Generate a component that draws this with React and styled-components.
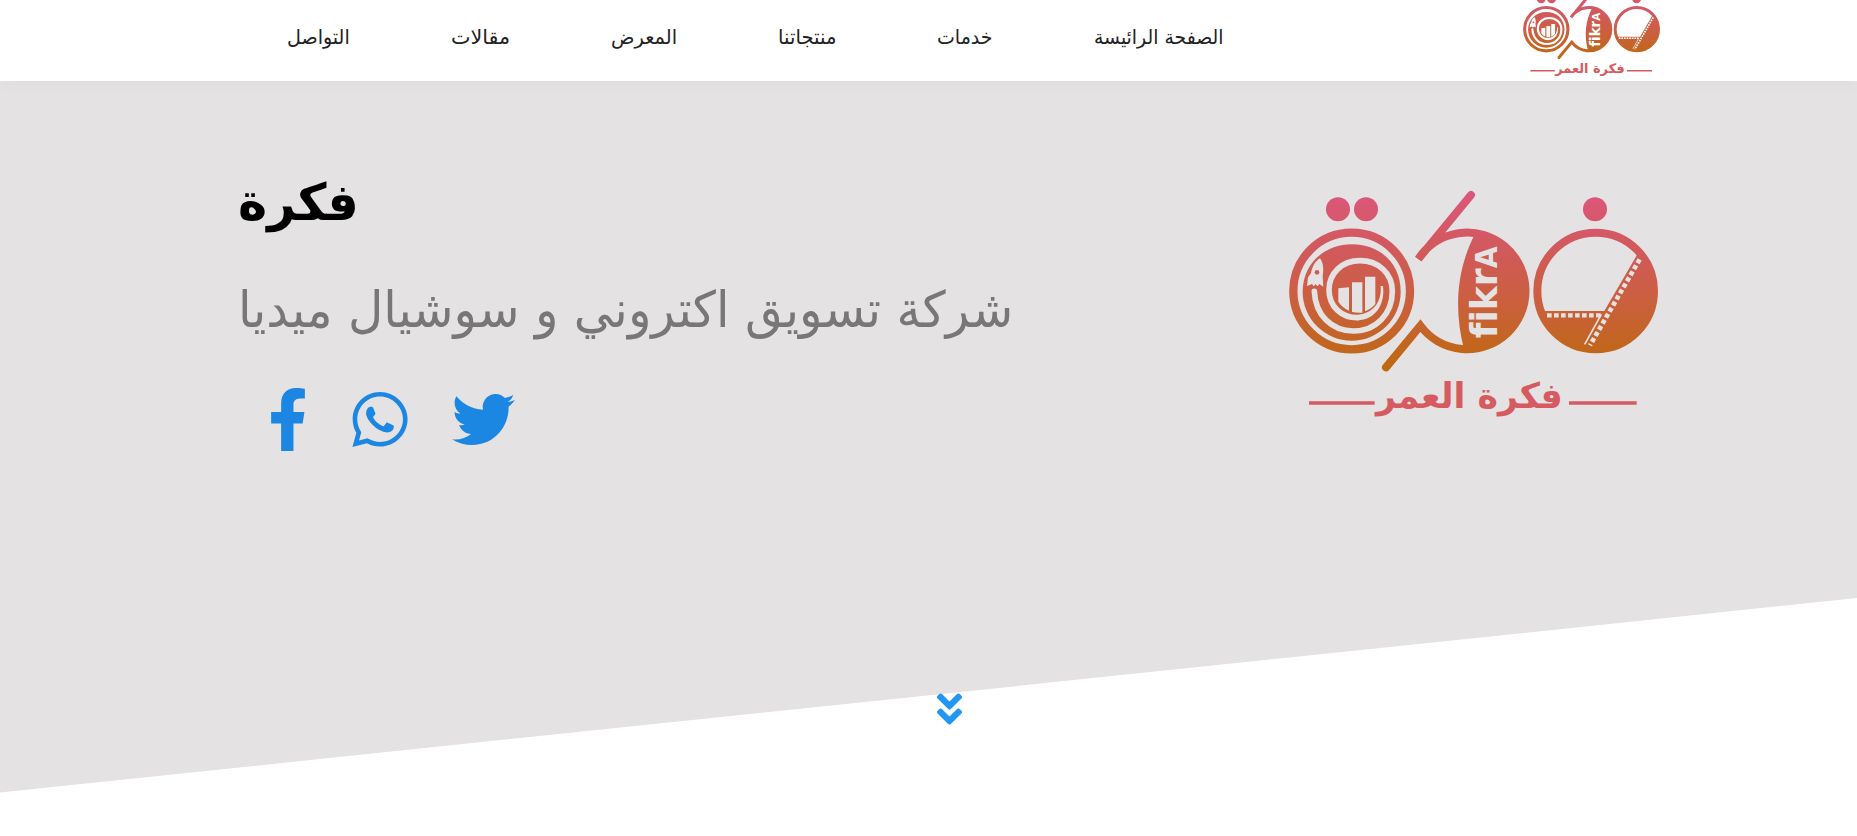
import React, { useLayoutEffect, useRef, useState } from "react";
import styled, { createGlobalStyle } from "styled-components";
import { FaFacebookF, FaWhatsapp, FaTwitter, FaAngleDoubleDown } from "react-icons/fa";

const GlobalStyle = createGlobalStyle`
  * { box-sizing: border-box; }
  html, body { margin: 0; padding: 0; background: #fff; }
  body { font-family: "DejaVu Sans", sans-serif; overflow: hidden; }
`;

const Page = styled.div`
  width: 100%;
  height: 836px;
  overflow: hidden;
`;

const Header = styled.header`
  position: relative;
  z-index: 1;
  display: flex;
  justify-content: space-between;
  height: 81px;
  padding: 0 197px 0 287px;
  background: #fff;
  box-shadow: 0 2px 18px rgba(0, 0, 0, 0.03);
`;

const Nav = styled.nav`
  display: flex;
  direction: rtl;
  gap: 101px;
  padding-top: 19px;
`;

const NavLink = styled.a`
  color: #222;
  font-size: 20px;
  line-height: 36px;
  text-decoration: none;
`;

const Brand = styled.div`
  margin-top: -12px;
`;

const Hero = styled.section`
  display: flex;
  justify-content: space-between;
  height: 712px;
  padding: 0 199px 0 238px;
  background: #e4e2e3;
  clip-path: polygon(0 0, 100% 0, 100% 517px, 0 711.5px);
`;

const Intro = styled.div`
  display: flex;
  flex-direction: column;
  align-items: flex-start;
  padding-top: 87px;
`;

const Title = styled.h1`
  margin: 0;
  color: #000;
  font-size: 51px;
  line-height: 70px;
  font-weight: 700;
`;

const Subtitle = styled.h2`
  margin: 36px 0 0;
  color: #777;
  font-size: 50px;
  line-height: 72px;
  font-weight: 400;
`;

const Socials = styled.div`
  display: flex;
  gap: 44px;
  margin: 42px 0 0 30px;
  color: #1b87e3;
`;

const SocialLink = styled.a`
  display: flex;
  color: inherit;
  svg { width: ${(p) => p.$width}px; height: 63px; }
`;

const HeroLogo = styled.div`
  padding-top: 99px;
`;

const ScrollDown = styled.a`
  display: flex;
  justify-content: center;
  margin-top: -104px;
  padding-left: 42px;
  position: relative;
  color: #2196f3;
  svg { width: 25px; height: 40px; }
`;

const FitBox = styled.span`
  display: block;
  direction: ltr;
  width: ${(p) => p.$width}px;
  white-space: nowrap;
`;

const FitInner = styled.span`
  display: inline-block;
  direction: rtl;
  transform-origin: 0 50%;
`;

function FitText({ width, children }) {
  const ref = useRef(null);
  const [scale, setScale] = useState(1);
  useLayoutEffect(() => {
    setScale(width / ref.current.offsetWidth);
  }, [width]);
  return (
    <FitBox $width={width}>
      <FitInner ref={ref} style={{ transform: `scaleX(${scale})` }}>{children}</FitInner>
    </FitBox>
  );
}

const LogoSvg = styled.svg`
  display: block;
  width: ${(p) => p.$width}px;
  height: auto;
`;

const LogoWord = styled.text`
  font-family: "DejaVu Sans", sans-serif;
  font-weight: 700;
  font-variant-ligatures: none;
`;

function Logo({ id, width, ground }) {
  const fill = `url(#${id})`;
  return (
    <LogoSvg $width={width} viewBox="57 0 1107 720" fill="none">
      <defs>
        <linearGradient id={id} gradientUnits="userSpaceOnUse" x1="0" y1="35" x2="0" y2="570">
          <stop offset="0" stopColor="#dc567c" />
          <stop offset="0.3" stopColor="#d2595e" />
          <stop offset="0.6" stopColor="#cb5f40" />
          <stop offset="0.87" stopColor="#c2661e" />
          <stop offset="1" stopColor="#bd6a10" />
        </linearGradient>
      </defs>

      <g fill={fill}>
        <circle cx="204" cy="88" r="36" />
        <circle cx="288" cy="88" r="36" />
        <circle cx="975" cy="88" r="36" />
        <path d="M245 193C330 193 392 250 392 335A147 147 0 0 1 98 335C98 250 165 193 245 193Z" />
      </g>
      <circle cx="245" cy="333" r="175" stroke={fill} strokeWidth="25" />

      <path d="M133 334C136 405 185 453 250 453C320 453 367 400 367 333C367 280 325 242 270 242C215 242 177 280 177 330C177 380 215 413 262 413" stroke={ground} strokeWidth="17" strokeLinecap="round" />
      <path d="M262 404C305 402 336 370 332 318L339 318C346 375 315 420 262 421Z" fill={ground} />
      <path d="M205 325L237 322V392Q217 383 205 365ZM246 307H277V398Q260 399 246 396ZM285 290H316V372Q304 387 285 394Z" fill={ground} />
      <path d="M150 235C161 250 161 270 158 288L160 320L148 312L143 319L137 313L131 319L126 312L111 318L114 292L123 280C126 260 137 242 150 235Z" fill={ground} />
      <circle cx="141" cy="277" r="7" fill={fill} />

      <path d="M603 45L445 237A175 175 0 1 1 451 437L348 562" stroke={fill} strokeWidth="24" strokeLinecap="round" />
      <path d="M616 160C558 270 552 390 582 508A175 175 0 0 0 766 333A175 175 0 0 0 616 160Z" fill={fill} />
      <LogoWord
        transform="translate(682 475) rotate(-90)"
        textLength="276"
        lengthAdjust="spacingAndGlyphs"
        fontSize="112"
        fill={ground}
      >
        fikr<tspan fontSize="88">A</tspan>
      </LogoWord>

      <circle cx="977" cy="333" r="175" stroke={fill} strokeWidth="24" />
      <path d="M808 393H1003L1109 211A180 180 0 1 1 808 393Z" fill={fill} />
      <path d="M831 406H995" stroke={ground} strokeWidth="13" strokeDasharray="14 7" />
      <path d="M1109 238L960 496" stroke={ground} strokeWidth="14" strokeDasharray="13 8" />
      <path d="M994 403L944 493" stroke={ground} strokeWidth="5" />

      <path d="M117 669H314M897 669H1100" stroke="#d65b61" strokeWidth="11" />
      <LogoWord
        x="318"
        y="684"
        textLength="560"
        lengthAdjust="spacingAndGlyphs"
        fontSize="106"
        fill="#d65b61"
      >
        فكرة العمر
      </LogoWord>
    </LogoSvg>
  );
}

const NAV_ITEMS = [
  { label: "الصفحة الرائيسة", width: 130 },
  { label: "خدمات", width: 56 },
  { label: "منتجاتنا", width: 58 },
  { label: "المعرض", width: 66 },
  { label: "مقالات", width: 59 },
  { label: "التواصل", width: 63 },
];

const SOCIALS = [
  { name: "facebook", Icon: FaFacebookF, width: 40 },
  { name: "whatsapp", Icon: FaWhatsapp, width: 56 },
  { name: "twitter", Icon: FaTwitter, width: 63 },
];

export default function App() {
  return (
    <Page>
      <GlobalStyle />
      <Header>
        <Nav>
          {NAV_ITEMS.map((item) => (
            <NavLink key={item.label}>
              <FitText width={item.width}>{item.label}</FitText>
            </NavLink>
          ))}
        </Nav>
        <Brand>
          <Logo id="brandGradient" width={137} ground="#fff" />
        </Brand>
      </Header>
      <Hero>
        <Intro>
          <Title><FitText width={121}>فكرة</FitText></Title>
          <Subtitle>
            <FitText width={775}>شركة تسويق اكتروني و سوشيال ميديا</FitText>
          </Subtitle>
          <Socials>
            {SOCIALS.map(({ name, Icon, width }) => (
              <SocialLink key={name} $width={width}><Icon /></SocialLink>
            ))}
          </Socials>
        </Intro>
        <HeroLogo>
          <Logo id="heroGradient" width={369} ground="#e4e2e3" />
        </HeroLogo>
      </Hero>
      <ScrollDown><FaAngleDoubleDown /></ScrollDown>
    </Page>
  );
}
